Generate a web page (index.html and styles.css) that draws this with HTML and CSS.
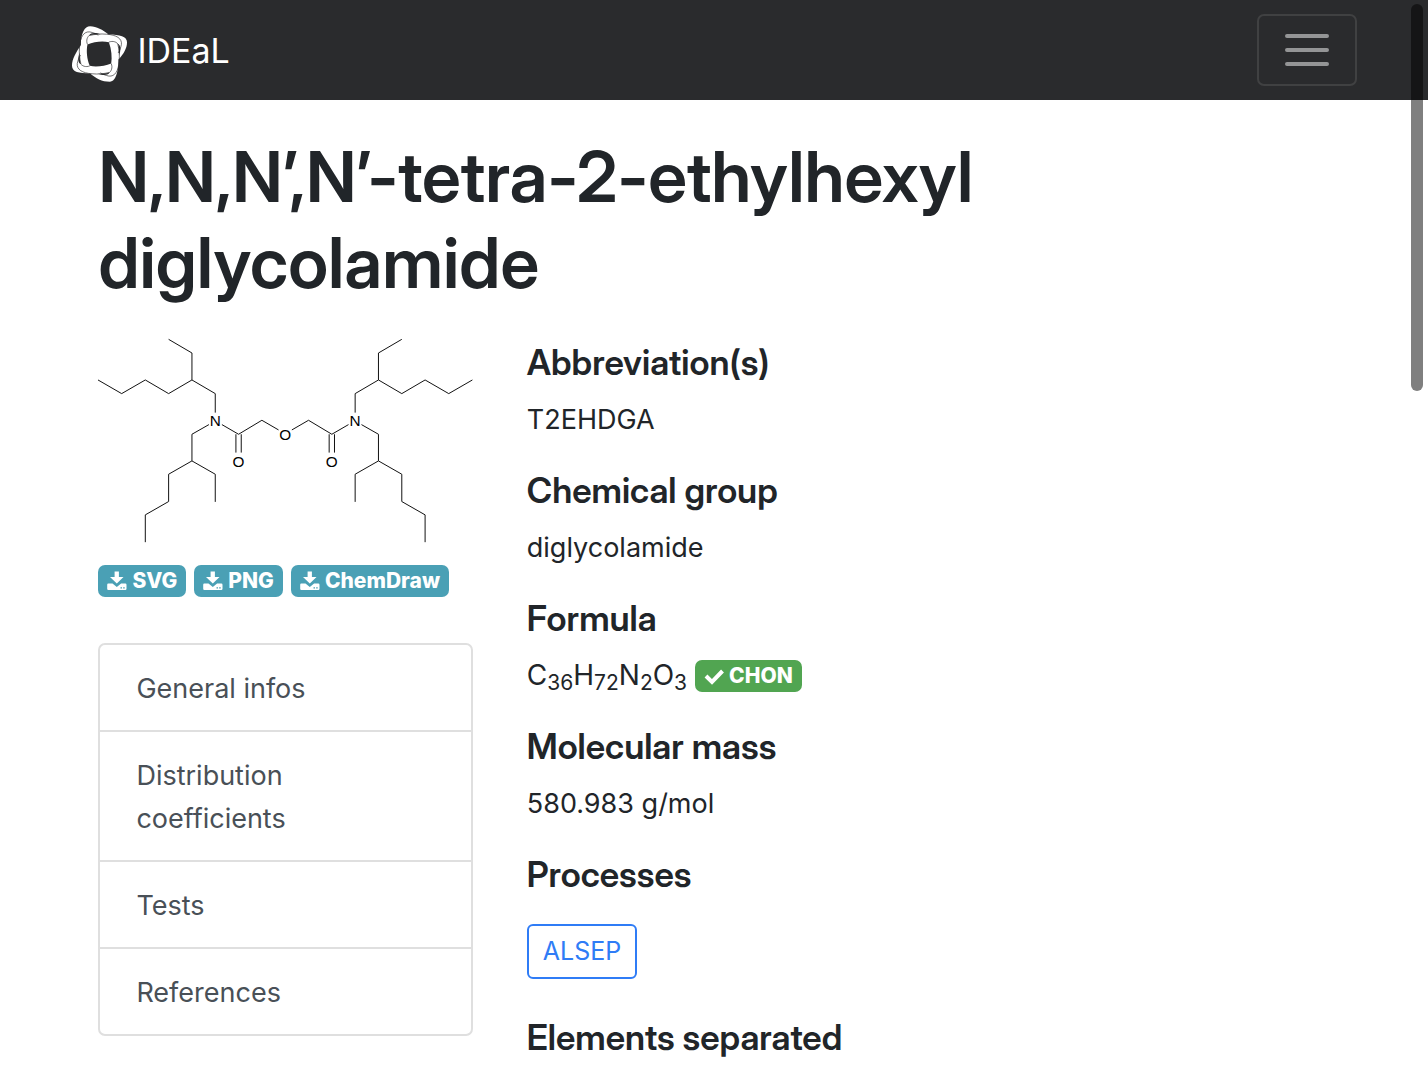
FILE: index.html
```html
<!DOCTYPE html>
<html lang="en">
<head>
<meta charset="utf-8">
<meta name="viewport" content="width=device-width, initial-scale=1">
<title>T2EHDGA - IDEaL</title>
<link rel="stylesheet" href="styles.css">
</head>
<body>
<svg class="sprite" aria-hidden="true">
  <symbol id="download" viewBox="0 0 20 20">
    <path fill="currentColor" fill-rule="evenodd" d="M7.600 .500h4.300v5.500h4.600L9.800 12.600 3 6h4.600zM1.300 12.500h4.200L9.800 16 14.100 12.500h4.200q1.200 0 1.200 1.200v4q0 1.300-1.200 1.300h-17Q.2 19 .2 17.700v-4q0-1.200 1.100-1.200zM13.500 16.200v1.400h1.500v-1.400zm2.700 0v1.400h1.500v-1.400z"/>
  </symbol>
</svg>
<header class="navbar">
  <a class="brand" href="#">
    <svg class="brand-logo" viewBox="62 45 176 176" aria-hidden="true">
      <defs>
        <g id="arm">
          <path class="gap" d="M118 76C122 68 136 67 152 73 138 73 128 74 118 76Z"/>
          <path class="edge" d="M112 104C107 92 111 80 121 74M118 77C134 73 152 71 170 73 200 75 217 86 215 104 213 114 210 122 205 130"/>
        </g>
      </defs>
      <path class="shape" d="M92 106C92 70 103 49 120 49 140 49 158 60 176 74 210 74 232 80 232 97 232 115 222 132 206 150 206 180 200 217 180 217 155 217 138 207 120 192 86 192 65 188 65 169 65 148 78 128 92 106ZM112 104C132 95 158 93 177 97 185 118 187 143 184 162 164 170 138 173 119 169 110 148 108 122 112 104Z"/>
      <use href="#arm"/>
      <use href="#arm" transform="rotate(90 148 133)"/>
      <use href="#arm" transform="rotate(180 148 133)"/>
      <use href="#arm" transform="rotate(270 148 133)"/>
    </svg>
    <span>IDEaL</span>
  </a>
  <button class="toggler" type="button" aria-label="Toggle navigation">
    <svg viewBox="0 0 54 54" aria-hidden="true"><path d="M7 13h40M7 27h40M7 41h40"/></svg>
  </button>
</header>
<main class="content">
  <h1>N,N,N’,N’-tetra-2-ethylhexyl diglycolamide</h1>
  <div class="columns">
    <aside class="side">
      <svg class="molecule" viewBox="24 24 1124 618" role="img" aria-label="Structure of T2EHDGA">
        <defs>
          <g id="half">
            <path d="M236 28l70 41v81l70 41v57M24 150l71 41 71-41 70 41 70-41M357 284l-51 29v80l-70 40v82l-70 40v82M306 393l70 40v83M396 284l50 29 70-42 50 29M438 313v55M454 313v55"/>
          </g>
        </defs>
        <use href="#half"/>
        <use href="#half" transform="matrix(-1 0 0 1 1172 0)"/>
        <text x="376" y="289">N</text><text x="796" y="289">N</text>
        <text x="446" y="412">O</text><text x="726" y="412">O</text>
        <text x="586" y="329">O</text>
      </svg>
      <div class="downloads">
        <a class="badge" href="#"><svg aria-hidden="true"><use href="#download"/></svg>SVG</a>
        <a class="badge" href="#"><svg aria-hidden="true"><use href="#download"/></svg>PNG</a>
        <a class="badge" href="#"><svg aria-hidden="true"><use href="#download"/></svg>ChemDraw</a>
      </div>
      <nav class="sections" aria-label="Sections">
        <a href="#">General infos</a>
        <a href="#">Distribution coefficients</a>
        <a href="#">Tests</a>
        <a href="#">References</a>
      </nav>
    </aside>
    <section class="details">
      <h2>Abbreviation(s)</h2>
      <p>T2EHDGA</p>
      <h2>Chemical group</h2>
      <p>diglycolamide</p>
      <h2>Formula</h2>
      <p class="formula"><span>C<sub>36</sub>H<sub>72</sub>N<sub>2</sub>O<sub>3</sub></span><span class="badge success"><svg viewBox="0 0 20 20" aria-hidden="true"><path fill="none" stroke="currentColor" stroke-width="4" d="M2 10l6 6L18.500 5"/></svg>CHON</span></p>
      <h2>Molecular mass</h2>
      <p>580.983 g/mol</p>
      <h2>Processes</h2>
      <p class="processes"><a class="process" href="#">ALSEP</a></p>
      <h2>Elements separated</h2>
    </section>
  </div>
</main>
<div class="scroll-thumb" aria-hidden="true"></div>
</body>
</html>
```
FILE: styles.css
```css
* { box-sizing: border-box; }

body {
  margin: 0;
  background: #fff;
  color: #212529;
  font: 27px/43px Inter, "Liberation Sans", sans-serif;
}

a { color: inherit; text-decoration: none; }
h1, h2, p { margin: 0; }
h1, h2 { font-family: "Inter Display", Inter, "Liberation Sans", sans-serif; font-weight: 600; }
.sprite { display: none; }

.navbar {
  display: flex;
  align-items: center;
  justify-content: space-between;
  padding: 14px 5%;
  background: #2a2b2d;
}

.brand {
  display: flex;
  align-items: center;
  gap: 8px;
  color: #fff;
  font-size: 34px;
}
.brand-logo { width: 58px; height: 58px; margin-top: 8px; }
.shape { fill: #fff; fill-rule: evenodd; }
.gap { fill: #2a2b2d; }
.edge { fill: none; stroke: #2a2b2d; stroke-width: 2; }

.toggler {
  display: flex;
  padding: 7px 21px;
  border: 2px solid #404142;
  border-radius: 7px;
  background: none;
}
.toggler svg { width: 54px; height: 54px; }
.toggler path {
  fill: none;
  stroke: #949596;
  stroke-width: 4;
  stroke-linecap: round;
}

.content { padding: 34px 5% 0; }

h1 {
  padding: 0 27px;
  font-size: 70px;
  line-height: 86px;
}

.columns {
  display: grid;
  grid-template-columns: 1fr 2fr;
  align-items: start;
  margin-top: 32px;
}
.side, .details { padding: 0 27px; }

.molecule { display: block; width: 100%; }
.molecule path { fill: none; stroke: #111; stroke-width: 3; }
.molecule text {
  font: 46px "Liberation Sans", sans-serif;
  text-anchor: middle;
}

.downloads { display: flex; gap: 8px; margin-top: 21px; }

.badge {
  display: inline-flex;
  align-items: center;
  gap: 5px;
  padding: 0 9px;
  border-radius: 7px;
  background: #4aa0b5;
  color: #fff;
  font-size: 21px;
  font-weight: 800;
  line-height: 32px;
}
.badge svg { width: 20px; height: 20px; }
.success { background: #51a551; }

.sections {
  margin-top: 46px;
  border: 2px solid #dfdfdf;
  border-radius: 7px;
}
.sections a {
  display: block;
  padding: 22px 36px 20px;
  color: #495057;
}
.sections a + a { border-top: 2px solid #dfdfdf; }

.details { padding-top: 3px; }
.details h2 {
  margin-bottom: 14px;
  font-size: 35px;
  line-height: 43px;
}
.details p { margin-bottom: 28px; }

.details .formula { display: flex; align-items: center; gap: 8px; font-size: 28px; }
sub { font-size: 75%; line-height: 0; vertical-align: baseline; position: relative; bottom: -0.25em; }

.process {
  padding: 7px 14px;
  border: 2px solid #2f7cf6;
  border-radius: 6px;
  color: #2f7cf6;
  font-size: 25px;
  line-height: 37px;
}
.details .processes { display: flex; margin-bottom: 37px; padding-top: 14px; }

.scroll-thumb {
  position: fixed;
  top: 4px;
  right: 5px;
  width: 12px;
  height: 387px;
  border-radius: 6px;
  background: rgba(0, 0, 0, 0.5);
}
```
